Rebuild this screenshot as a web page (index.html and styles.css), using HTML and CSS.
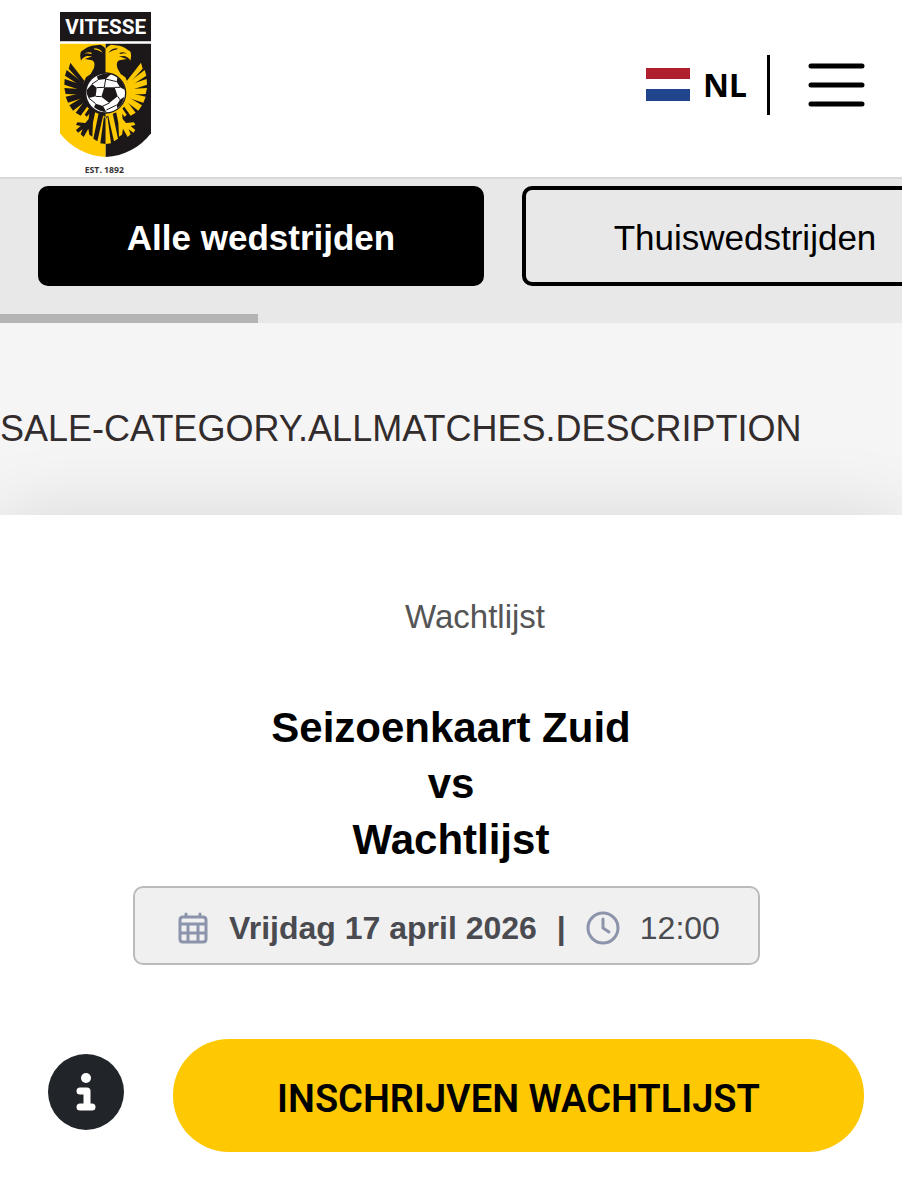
FILE: index.html
```html
<!DOCTYPE html>
<html lang="nl">
	<head>
		<meta charset="utf-8">
		<meta name="viewport" content="width=device-width, initial-scale=1">
		<title>Vitesse - Alle wedstrijden</title>
		<link rel="stylesheet" href="styles.css">
	</head>
	<body>
		<header class="site-header">
			<a class="logo" href="#" aria-label="Vitesse">
				<svg viewBox="0 0 330 555" role="img" aria-hidden="true">
					<defs>
						<!-- half an eagle, mirrored for the other side of the shield -->
						<g id="eagle">
							<path d="M167 148Q162 137 150 134L126 137C112 140 104 147 94 154Q88 162 93 182Q98 171 111 168L127 169L104 177L126 181Q137 186 132 204L122 222L108 232L96 260L100 310L124 332L167 350z" />
							<path d="M106 246L61 188L56 206L96 250z" />
							<path d="M104 252L50 210L45 227L96 260z" />
							<path d="M104 257L44 237L43 254L98 272z" />
							<path d="M104 268L43 264L47 282L102 284z" />
							<path d="M106 276L47 290L54 308L106 292z" />
							<path d="M108 286L58 316L69 332L112 300z" />
							<path d="M112 292L77 338L92 347L120 308z" />
							<path d="M122 318L104 344L110 350L130 328z" />
							<path d="M119 330L136 334L129 368L127 410L118 404L115 386L101 411L92 403L98 388L84 398L78 390L92 378L78 375L82 367L106 369L116 357z" />
							<path d="M146 340L160 344L142 424L130 416z" />
							<path d="M162 348L167 360V432L151 430z" />
						</g>
						<g id="eagle-face">
							<path d="M103 161Q112 153 127 159L122 162Q112 158 103 161z" />
							<path d="M132 145Q150 145 158 158Q147 151 132 148z" />
						</g>
					</defs>
					<!-- shield -->
					<path fill="#1c181a" d="M30 36H303V124H30z" />
					<path fill="#ffc900" d="M30 131H167V471C112 469 62 442 30 400z" />
					<path fill="#1c181a" d="M167 131H303V400C271 442 222 469 167 471z" />
					<text class="logo-name" x="167" y="103">VITESSE</text>
					<use href="#eagle" fill="#1c181a" />
					<use href="#eagle-face" fill="#ffc900" />
					<g transform="matrix(-1 0 0 1 334 0)">
						<use href="#eagle" fill="#ffc900" />
						<use href="#eagle-face" fill="#1c181a" />
					</g>
					<!-- ball -->
					<circle cx="167" cy="279" r="60" fill="#fff" stroke="#1c181a" stroke-width="4" />
					<g fill="#1c181a">
						<path d="M154 290L163 262L194 262L203 289L178 309z" />
						<path d="M141 229Q160 217 184 222L167 237L144 240z" />
						<path d="M202 232Q220 244 225 270L210 262L200 245z" />
						<path d="M110 270L126 252L140 263L137 289L116 294Q108 283 110 270z" />
						<path d="M210 299L223 290Q219 313 202 325L200 315z" />
						<path d="M137 311L159 318L169 336Q150 336 132 322z" />
					</g>
					<path fill="none" stroke="#1c181a" stroke-width="3" d="M163 262L140 263M163 262L167 237M194 262L210 262M203 289L210 299M178 309L159 318M154 290L137 289M126 252L144 240M116 294L137 311M167 237L200 245M169 330L200 315" />
					<text class="logo-year" x="163" y="519">EST. 1892</text>
				</svg>
			</a>
			<button class="language" type="button">
				<svg class="flag" viewBox="0 0 44 34" aria-hidden="true">
					<path fill="#b01f2d" d="M0 0H44V11H0z" />
					<path fill="#fff" d="M0 11H44V21H0z" />
					<path fill="#21458c" d="M0 21H44V33H0z" />
				</svg>
				<span>NL</span>
			</button>
			<button class="menu" type="button" aria-label="Menu">
				<svg viewBox="0 0 56 44" aria-hidden="true">
					<path stroke="#000" stroke-width="5" stroke-linecap="round" d="M3 3H54M3 22H54M3 41H54" />
				</svg>
			</button>
		</header>

		<nav class="categories">
			<div class="tabs">
				<button class="tab active" type="button">Alle wedstrijden</button>
				<button class="tab" type="button">Thuiswedstrijden</button>
			</div>
			<div class="scroll-thumb"></div>
		</nav>

		<main>
			<p class="description">SALE-CATEGORY.ALLMATCHES.DESCRIPTION</p>

			<article class="match">
				<p class="competition">Wachtlijst</p>
				<h2>Seizoenkaart Zuid<br>vs<br>Wachtlijst</h2>
				<div class="date">
					<svg class="calendar" viewBox="0 0 30 32" aria-hidden="true">
						<path fill="none" stroke="#8b94aa" stroke-width="3" stroke-linecap="round" d="M8 2V6M22 2V6" />
						<path fill="#f0f0f0" stroke="#8b94aa" stroke-width="3" d="M5 5H25Q28 5 28 8V27Q28 30 25 30H5Q2 30 2 27V8Q2 5 5 5zM2 12H28M2 21H28M10 13V30M20 13V30" />
					</svg>
					<strong>Vrijdag 17 april 2026</strong>
					<strong>|</strong>
					<svg class="clock" viewBox="0 0 34 34" aria-hidden="true">
						<circle cx="17" cy="17" r="15" fill="none" stroke="#8b94aa" stroke-width="3" />
						<path fill="none" stroke="#8b94aa" stroke-width="3" stroke-linecap="round" stroke-linejoin="round" d="M17 8V17L23 21" />
					</svg>
					<time>12:00</time>
				</div>
				<div class="actions">
					<button class="info" type="button" aria-label="Informatie">
						<svg viewBox="0 0 76 76" aria-hidden="true">
							<circle cx="38" cy="38" r="38" fill="#212529" />
							<circle cx="38" cy="24" r="5" fill="#fff" />
							<path fill="none" stroke="#fff" stroke-width="7" stroke-linecap="round" stroke-linejoin="round" d="M32 37H39V53M32 53H44" />
						</svg>
					</button>
					<button class="subscribe" type="button">INSCHRIJVEN WACHTLIJST</button>
				</div>
			</article>
		</main>
	</body>
</html>
```
FILE: styles.css
```css
* {
	box-sizing: border-box;
}
body {
	background-color: #fff;
	color: #000;
	font-family: "Liberation Sans", Arial, sans-serif;
	margin: 0;
}
button {
	background: none;
	border: 0;
	color: inherit;
	cursor: pointer;
	font: inherit;
	padding: 0;
}
svg {
	display: block;
}

.site-header {
	align-items: center;
	border-bottom: 2px solid #d9d9d9;
	display: flex;
	height: 179px;
	padding: 0 36px 0 50px;
}
.logo {
	align-self: flex-start;
	margin-right: auto;
}
.logo svg {
	height: 185px;
	margin-bottom: -8px;
	width: 110px;
}
.logo-name,
.logo-year {
	font-weight: bold;
	text-anchor: middle;
}
.logo-name {
	fill: #fff;
	font-family: Roboto, sans-serif;
	font-size: 62px;
}
.logo-year {
	fill: #333;
	font-family: "Open Sans", sans-serif;
	font-size: 26px;
}
.language {
	align-items: center;
	border-right: 3px solid #000;
	display: flex;
	font-family: "Noto Sans", sans-serif;
	font-size: 32px;
	font-weight: bold;
	gap: 13px;
	height: 60px;
	margin: 0 36px 8px 0;
	padding-right: 20px;
}
.flag {
	height: 34px;
	width: 44px;
}
.menu {
	margin-bottom: 8px;
}
.menu svg {
	height: 44px;
	width: 60px;
}

.categories {
	background-color: #e8e8e8;
	overflow: hidden;
}
.tabs {
	display: flex;
	gap: 38px;
	padding: 7px 38px 28px;
}
.tab {
	border: 4px solid #000;
	border-radius: 10px;
	flex: 0 0 446px;
	font-size: 35px;
	height: 100px;
	padding-top: 4px;
}
.tab.active {
	background-color: #000;
	color: #fff;
	font-weight: bold;
}
.scroll-thumb {
	background-color: #b4b4b4;
	height: 9px;
	width: 258px;
}

main {
	background-color: #f5f5f5;
}
.description {
	color: #332c2c;
	font-size: 36px;
	line-height: 56px;
	margin: 0;
	padding: 78px 0 58px;
}
.match {
	align-items: center;
	background-color: #fff;
	box-shadow: 0 0 70px rgba(0, 0, 0, 0.12);
	display: flex;
	flex-direction: column;
	padding: 74px 38px 48px;
}
.competition {
	color: #555;
	font-size: 33px;
	line-height: 56px;
	margin: 0;
	padding-left: 48px;
}
h2 {
	font-size: 42px;
	line-height: 56px;
	margin: 55px 0 18px;
	text-align: center;
}
.date {
	align-items: center;
	align-self: stretch;
	background-color: #f0f0f0;
	border: 2px solid #bbb;
	border-radius: 10px;
	color: #4a4b50;
	display: flex;
	font-size: 32px;
	gap: 20px;
	height: 79px;
	justify-content: center;
	line-height: 56px;
	margin: 0 104px 0 95px;
	padding: 4px 0 0 4px;
}
.calendar {
	height: 32px;
	width: 32px;
}
.clock {
	height: 34px;
	width: 34px;
}
.actions {
	align-items: center;
	align-self: stretch;
	display: flex;
	gap: 49px;
	margin-top: 74px;
}
.info {
	margin: 0 0 8px 10px;
}
.info svg {
	height: 76px;
	width: 76px;
}
.subscribe {
	background-color: #fec803;
	border-radius: 56px;
	flex: 1;
	font-family: Roboto, sans-serif;
	font-size: 38px;
	font-weight: 600;
	height: 113px;
	padding-top: 6px;
}
```
